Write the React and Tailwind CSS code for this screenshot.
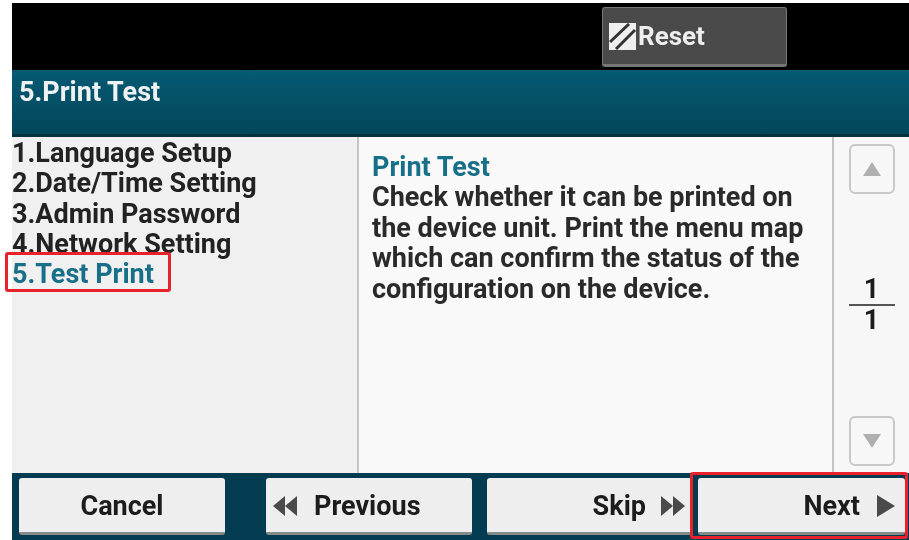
import React from "react"

function Triangle({ dir = "right", className = "" }) {
  const points = dir === "right" ? "0,0 12,8 0,16" : dir === "left" ? "12,0 0,8 12,16" : dir === "up" ? "0,12 8,0 16,12" : "0,0 16,0 8,12"
  const box = dir === "up" || dir === "down" ? "0 0 16 12" : "0 0 12 16"
  return (
    <svg viewBox={box} preserveAspectRatio="none" className={className}>
      <polygon points={points} fill="currentColor" />
    </svg>
  )
}

function FooterButton({ children, className = "" }) {
  return (
    <button className={`relative h-[57px] shrink-0 rounded-[3px] bg-[#eeeeee] border-b-[3px] border-[#858a8b] pt-[2px] flex items-center text-[27px] text-[#1c1c1c] font-bold ${className}`}>
      {children}
    </button>
  )
}

export default function App() {
  const menu = ["1.Language Setup", "2.Date/Time Setting", "3.Admin Password", "4.Network Setting"]

  return (
    <div className="w-[909px] h-[540px] bg-white overflow-hidden font-['Roboto','Liberation_Sans',sans-serif] pt-[3px] pl-[12px] flex flex-col blur-[0.5px]">
      <div className="h-[67px] bg-black shrink-0 flex justify-end pr-[122px] pt-[4px]">
        <div className="w-[185px] h-[60px] rounded-[3px] bg-[#4a4a4a] border border-[#777777] border-b-[3px] flex items-center pl-[6px] gap-[2px] text-[26px] font-bold text-[#eeeeee]">
          <svg viewBox="0 0 27 27" className="w-[27px] h-[27px]">
            <rect width="27" height="27" fill="#eeeeee" />
            <path d="M1 19 L20 1 M7 26 L26 7" stroke="#333333" strokeWidth="3" />
          </svg>
          Reset
        </div>
      </div>

      <div className="h-[67px] shrink-0 bg-gradient-to-b from-[#055a73] to-[#03465a] border-b-[3px] border-[#02303f] text-[27px] font-bold text-[#eef2f3] pl-[7px] pt-[4px] leading-[36px]">
        5.Print Test
      </div>

      <div className="h-[336px] shrink-0 flex">
        <div className="w-[347px] bg-[#f0f0f0] border-r-2 border-[#c4c4c4] pt-[1px] text-[27px] font-bold leading-[30.3px] text-[#222222]">
          {menu.map((item) => (
            <div key={item}>{item}</div>
          ))}
          <div className="relative text-[#176f88]">
            5.Test Print
            <div className="absolute left-[-7px] top-[-7px] w-[166px] h-[40px] border-[3px] border-[#e8222a] rounded-[3px]"></div>
          </div>
        </div>

        <div className="flex-1 bg-[#f9f9f9] pl-[13px] pt-[15px] text-[27px] font-bold leading-[30.4px] text-[#2a2a2a]">
          <div className="text-[#176f88]">Print Test</div>
          <div>Check whether it can be printed on</div>
          <div>the device unit. Print the menu map</div>
          <div>which can confirm the status of the</div>
          <div>configuration on the device.</div>
        </div>

        <div className="w-[77px] bg-[#f7f7f7] border-l-2 border-[#c4c4c4] flex flex-col items-center justify-between pt-[7px] pb-[7px]">
          <div className="w-[46px] h-[50px] rounded-[6px] border-2 border-[#c8c8c8] flex items-center justify-center">
            <Triangle dir="up" className="w-[18px] h-[14px] text-[#b0b0b0]" />
          </div>
          <div className="w-[46px] flex flex-col items-center text-[27px] font-bold text-[#1c1c1c] leading-[29px]">
            <span>1</span>
            <span className="w-full h-[2px] bg-[#555555]"></span>
            <span>1</span>
          </div>
          <div className="w-[46px] h-[50px] rounded-[6px] border-2 border-[#c8c8c8] flex items-center justify-center">
            <Triangle dir="down" className="w-[18px] h-[14px] text-[#b0b0b0]" />
          </div>
        </div>
      </div>

      <div className="flex-1 bg-[#033c50] flex pt-[5px] pl-[7px]">
        <FooterButton className="w-[206px] justify-center">Cancel</FooterButton>
        <FooterButton className="w-[206px] ml-[41px] pl-[7px] gap-[17px]">
          <span className="flex text-[#4a4a4a]">
            <Triangle dir="left" className="w-[12px] h-[20px]" />
            <Triangle dir="left" className="w-[12px] h-[20px]" />
          </span>
          Previous
        </FooterButton>
        <FooterButton className="w-[205px] ml-[15px] justify-end pr-[7px] gap-[15px]">
          Skip
          <span className="flex text-[#4a4a4a]">
            <Triangle dir="right" className="w-[12px] h-[20px]" />
            <Triangle dir="right" className="w-[12px] h-[20px]" />
          </span>
        </FooterButton>
        <FooterButton className="w-[207px] ml-[6px] justify-end pr-[10px] gap-[17px]">
          Next
          <Triangle dir="right" className="w-[18px] h-[22px] text-[#4a4a4a]" />
          <div className="absolute left-[-8px] top-[-6px] w-[218px] h-[67px] border-[3px] border-[#e8222a] rounded-[3px]"></div>
        </FooterButton>
      </div>
    </div>
  )
}
